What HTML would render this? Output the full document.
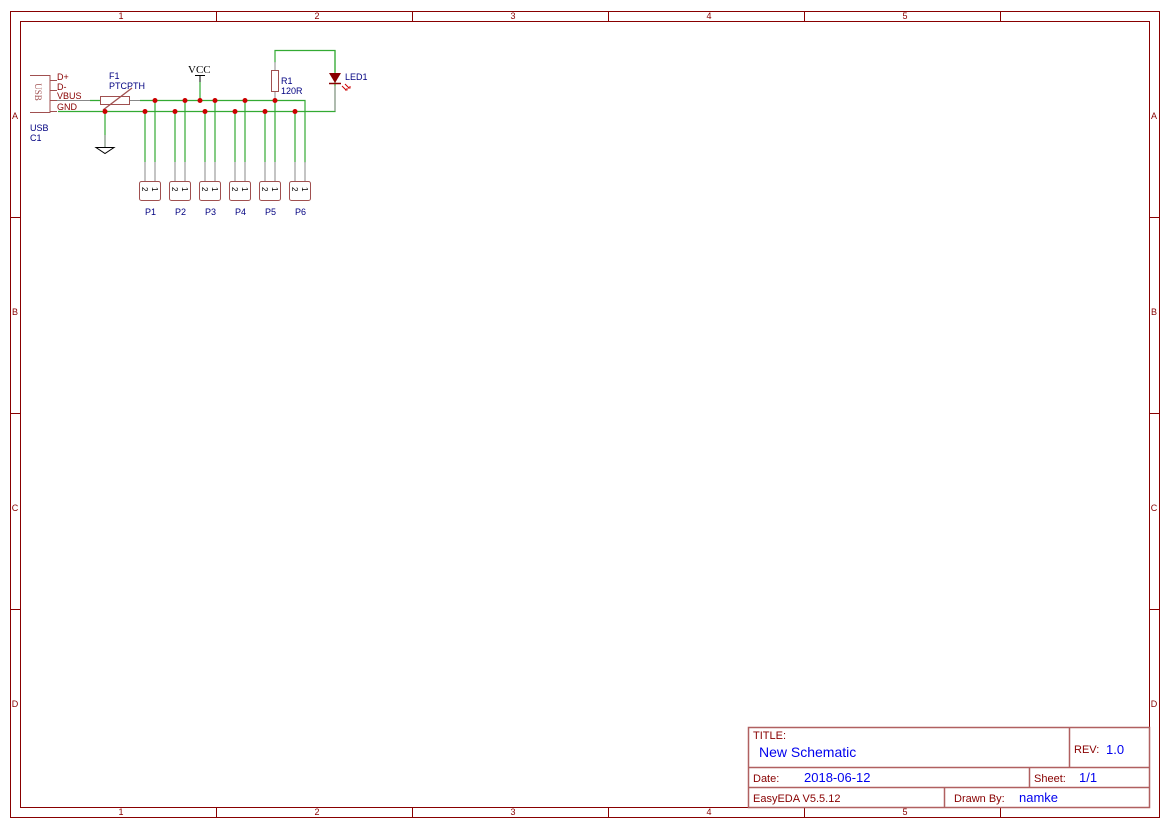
<!DOCTYPE html>
<html><head><style>body{margin:0;background:#fff}svg{display:block}</style></head><body>
<svg width="1169" height="828" viewBox="0 0 1169 828" xmlns="http://www.w3.org/2000/svg" font-family="Liberation Sans, DejaVu Sans, sans-serif">
<g stroke="#880000" fill="none" stroke-width="1">
<rect x="10.5" y="11.5" width="1149" height="806"/>
<rect x="20.5" y="21.5" width="1129" height="786"/>
<path d="M216.5 11v10M412.5 11v10M608.5 11v10M804.5 11v10M1000.5 11v10M216.5 807v10M412.5 807v10M608.5 807v10M804.5 807v10M1000.5 807v10"/>
<path d="M10 217.5h10M10 413.5h10M10 609.5h10M1149 217.5h10M1149 413.5h10M1149 609.5h10"/>
</g>
<g fill="#880000" font-size="9" text-anchor="middle">
<text x="121" y="19">1</text><text x="317" y="19">2</text><text x="513" y="19">3</text><text x="709" y="19">4</text><text x="905" y="19">5</text>
<text x="121" y="815">1</text><text x="317" y="815">2</text><text x="513" y="815">3</text><text x="709" y="815">4</text><text x="905" y="815">5</text>
<text x="15" y="119">A</text><text x="15" y="315">B</text><text x="15" y="511">C</text><text x="15" y="707">D</text>
<text x="1154" y="119">A</text><text x="1154" y="315">B</text><text x="1154" y="511">C</text><text x="1154" y="707">D</text>
</g>
<!-- title block -->
<g stroke="#b06060" fill="none" stroke-width="1.5">
<rect x="748.5" y="727.5" width="401" height="80"/>
<path d="M748 767.5h401M748 787.5h401M1069.5 727v40M1029.5 767v20M944.5 787v20"/>
</g>
<g font-size="11" fill="#880000">
<text x="753" y="739">TITLE:</text>
<text x="1074" y="753">REV:</text>
<text x="753" y="782">Date:</text>
<text x="1034" y="782">Sheet:</text>
<text x="753" y="802">EasyEDA V5.5.12</text>
<text x="954" y="802">Drawn By:</text>
</g>
<g fill="#0000ee">
<text x="759" y="757" font-size="14">New Schematic</text>
<text x="1106" y="754" font-size="13">1.0</text>
<text x="804" y="782" font-size="13">2018-06-12</text>
<text x="1079" y="782" font-size="13">1/1</text>
<text x="1019" y="802" font-size="13">namke</text>
</g>
<!-- USB -->
<g stroke="#a05050" fill="none">
<path d="M30 75.5h20v37h-20M50 80.5h7M50 90.5h7M50 100.5h7M50 111.5h7"/>
</g>
<g stroke="#888" fill="none"><path d="M57 100.5h33M130 100.5h10"/></g>
<text x="0" y="0" font-size="9" fill="#a05050" font-family="Liberation Serif, serif" transform="translate(35,92) rotate(90)" text-anchor="middle">USB</text>
<g font-size="9" fill="#880000">
<text x="57" y="80">D+</text><text x="57" y="90">D-</text><text x="57" y="99">VBUS</text><text x="57" y="110">GND</text>
</g>
<g font-size="9" fill="#000080">
<text x="30" y="131">USB</text><text x="30" y="141">C1</text>
<text x="109" y="79">F1</text><text x="109" y="89">PTCPTH</text>
<text x="281" y="84">R1</text><text x="281" y="94">120R</text>
<text x="345" y="80">LED1</text>
<text x="145" y="215">P1</text><text x="175" y="215">P2</text><text x="205" y="215">P3</text><text x="235" y="215">P4</text><text x="265" y="215">P5</text><text x="295" y="215">P6</text>
</g>
<text x="188" y="73" font-size="11" font-family="Liberation Serif, serif" fill="#000">VCC</text>
<!-- wires -->
<g stroke="#33aa33" stroke-width="1.2" fill="none">
<path d="M90 100.5h10M140 100.5h165v62"/>
<path d="M58 111.5h277v-61h-60v12"/>
<path d="M335 50v22"/>
<path d="M105 111v36M200 100V82"/>
<path d="M145 111v51M155 100v62M175 111v51M185 100v62M205 111v51M215 100v62M235 111v51M245 100v62M265 111v51M275 100v62M295 111v51"/>
</g>
<g stroke="#888" fill="none">
<path d="M145 162v19M155 162v19M175 162v19M185 162v19M205 162v19M215 162v19M235 162v19M245 162v19M265 162v19M275 162v19M295 162v19M305 162v19"/>
<path d="M275 62v8M275 92v8M335 86v25M105 135v12"/>
</g>
<!-- fuse -->
<rect x="100.5" y="96.5" width="29" height="8" fill="none" stroke="#a05050"/>
<path d="M103 110L132 88" stroke="#a05050" stroke-width="1.3"/>
<!-- resistor -->
<rect x="271.5" y="70.5" width="7" height="21" fill="none" stroke="#a05050"/>
<!-- VCC -->
<path d="M195 75.5h10M200 75v7" stroke="#000"/>
<!-- gnd -->
<path d="M96 147.5h18l-9 6z" stroke="#000" fill="none"/>
<!-- LED -->
<path d="M329 73h12l-6 10z" fill="#880000"/>
<path d="M329 83.5h12" stroke="#880000" stroke-width="1.5"/>
<path d="M342 86l4 4M345 84l4 4" stroke="#cc0000"/>
<path d="M345 90l2 0 0-2M348 88l2 0 0-2" stroke="#cc0000" fill="none"/>
<!-- connectors -->
<g stroke="#a05050" fill="none">
<rect x="139.5" y="181.5" width="21" height="19" rx="2"/>
<rect x="169.5" y="181.5" width="21" height="19" rx="2"/>
<rect x="199.5" y="181.5" width="21" height="19" rx="2"/>
<rect x="229.5" y="181.5" width="21" height="19" rx="2"/>
<rect x="259.5" y="181.5" width="21" height="19" rx="2"/>
<rect x="289.5" y="181.5" width="21" height="19" rx="2"/>
</g>
<g font-size="8" fill="#000">
<text transform="translate(142,187) rotate(90)">2</text><text transform="translate(152,187) rotate(90)">1</text>
<text transform="translate(172,187) rotate(90)">2</text><text transform="translate(182,187) rotate(90)">1</text>
<text transform="translate(202,187) rotate(90)">2</text><text transform="translate(212,187) rotate(90)">1</text>
<text transform="translate(232,187) rotate(90)">2</text><text transform="translate(242,187) rotate(90)">1</text>
<text transform="translate(262,187) rotate(90)">2</text><text transform="translate(272,187) rotate(90)">1</text>
<text transform="translate(292,187) rotate(90)">2</text><text transform="translate(302,187) rotate(90)">1</text>
</g>
<!-- junctions -->
<g fill="#cc0000">
<circle cx="155" cy="100.5" r="2.5"/><circle cx="185" cy="100.5" r="2.5"/><circle cx="200" cy="100.5" r="2.5"/><circle cx="215" cy="100.5" r="2.5"/><circle cx="245" cy="100.5" r="2.5"/><circle cx="275" cy="100.5" r="2.5"/>
<circle cx="105" cy="111.5" r="2.5"/><circle cx="145" cy="111.5" r="2.5"/><circle cx="175" cy="111.5" r="2.5"/><circle cx="205" cy="111.5" r="2.5"/><circle cx="235" cy="111.5" r="2.5"/><circle cx="265" cy="111.5" r="2.5"/><circle cx="295" cy="111.5" r="2.5"/>
</g>
</svg>
</body></html>
